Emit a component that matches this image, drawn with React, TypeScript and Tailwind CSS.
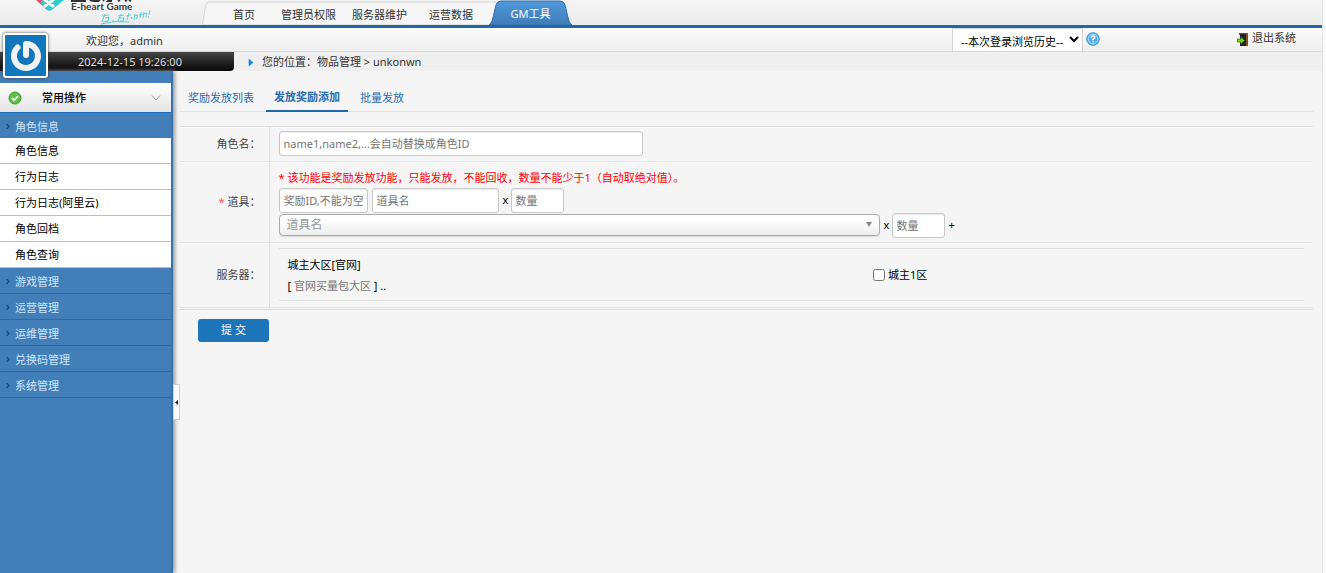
import clsx from "clsx";

const NAV = ["首页", "管理员权限", "服务器维护", "运营数据"];
const SUB_ITEMS = ["角色信息", "行为日志", "行为日志(阿里云)", "角色回档", "角色查询"];
const GROUPS = ["游戏管理", "运营管理", "运维管理", "兑换码管理", "系统管理"];
const TABS = ["奖励发放列表", "发放奖励添加", "批量发放"];

const inputClass =
  "h-[25px] rounded-[3px] border border-[#c8c8c8] bg-white px-1 text-[11px] text-black shadow-[inset_0_1px_1px_rgba(0,0,0,0.08)] placeholder:text-[#757575] focus:outline-none";

function Logo() {
  return (
    <svg className="block h-[25px] w-[130px]" viewBox="0 0 130 25" aria-label="E-heart Game">
      <path d="M6 0 L17 10 L17 0 Z" fill="#ef4f6b" />
      <path d="M11 4 L17 10 Q20 12 23 9 L34 0 L13 0 Q10 2 11 4 Z" fill="#2fc9cf" />
      <path d="M15 0 L23 6 M23 0 L15 6" stroke="#fff" strokeWidth="3" strokeLinecap="round" />
      <path
        d="M41 1 H56 M60 0 Q61 1 68 1 L70 0 M74 0 L73 1 M79 0 L78 1 H82 M90 0 L88 1 M97 0 L95 1 M99 0 L101 1"
        stroke="#333"
        strokeWidth="2"
        fill="none"
      />
      <text x="41" y="10" fontSize="10" fontWeight="700" fill="#3c3c3c" fontFamily="Lato, sans-serif">
        E-heart Game
      </text>
      <path
        d="M72 16 l7 -1 M75 14 l-3 8 M75 18 l4 -1 l-1 4 l-5 1 M82 21 l2 0 M88 16 l6 -1 M91 14 l-3 7 M90 18 l4 0 l-1 3 l-3 0 M96 16 l5 -1 M99 13 l-2 7 M101 17 l1 2 M105 14 l-1 6 M104 16 l4 -1 l-2 4 M111 12 l-1 6 M109 15 l4 -1 M114 12 l-1 6 M114 14 l3 -1 l-1 4 M120 10 l-1 5 M118 17 l1 0 M71 24 q14 -4 28 -2"
        stroke="#5ccfd6"
        strokeWidth="1"
        fill="none"
      />
    </svg>
  );
}

function TopNav() {
  return (
    <header className="flex h-7 items-end border-b-3 border-[#2268a8] bg-linear-to-b from-[#f5f5f5] to-[#ebebeb]">
      <div className="w-[202px] shrink-0 pl-[30px]">
        <Logo />
      </div>
      <nav className="relative h-6 pr-6 pl-[31px] text-[#333]">
        <svg className="absolute inset-0 h-full w-full" viewBox="0 0 300 24" preserveAspectRatio="none">
          <path d="M0 24 C3 16 2 1 7 1 H300 V24 Z" fill="#f6f6f6" stroke="#d2d2d2" strokeWidth="1" />
        </svg>
        <ul className="relative flex h-full items-center gap-4 pt-[3px]">
          {NAV.map((item) => (
            <li key={item} className="first:mr-[10px] last:ml-[6px]">
              <a href="#">{item}</a>
            </li>
          ))}
        </ul>
      </nav>
      <a href="#" className="relative -ml-2 flex h-[25px] w-[83px] items-center justify-center pt-[3px] text-white">
        <svg className="absolute inset-0 h-full w-full" viewBox="0 0 83 25">
          <defs>
            <linearGradient id="tab" x1="0" y1="0" x2="0" y2="1">
              <stop offset="0" stopColor="#5099dc" />
              <stop offset="1" stopColor="#3f7cb6" />
            </linearGradient>
          </defs>
          <path d="M0 25 C4 22 4 16 7 5 Q8 1 12 1 H71 Q75 1 76 5 C79 16 79 22 83 25 Z" fill="url(#tab)" stroke="#2f70ad" />
        </svg>
        <span className="relative">GM工具</span>
      </a>
    </header>
  );
}

function PowerBadge() {
  return (
    <button
      type="button"
      aria-label="首页"
      className="absolute top-[33px] left-[3px] z-10 flex h-[45px] w-[45px] items-center justify-center rounded-[3px] border-2 border-white bg-[#1177bd] shadow-[0_0_3px_#333]"
    >
      <svg className="h-9 w-9" viewBox="0 0 36 36" fill="none" stroke="#f2f2f2" strokeWidth="6" strokeLinecap="round" strokeLinejoin="round">
        <path d="M9.500 9.500 A12 12 0 1 0 18 6 V17" />
      </svg>
    </button>
  );
}

function UserBar() {
  return (
    <div className="flex h-6 items-stretch border-b border-[#d9d9d9] bg-linear-to-b from-[#fcfcfc] to-[#eeeeee] text-[#333]">
      <p className="flex flex-1 items-center pt-[2px] pl-[86px]">欢迎您，admin</p>
      <select
        aria-label="浏览历史"
        className="w-[131px] border-x border-t border-[#d5d5d5] bg-white pt-[2px] pl-1 text-[11px] text-black"
      >
        <option>--本次登录浏览历史--</option>
      </select>
      <div className="flex w-[239px] items-start justify-between pt-[2px] pr-[26px] pl-[3px]">
        <a href="#" aria-label="帮助" className="mt-[2px]">
          <svg className="h-[14px] w-[14px]" viewBox="0 0 14 14">
            <circle cx="7" cy="7" r="6.3" fill="#52aee8" stroke="#3b93d2" />
            <circle cx="7" cy="7" r="4.8" fill="none" stroke="#c8e8fb" strokeWidth="0.8" />
            <path d="M5.2 5.5 Q5.2 4 7 4 Q8.8 4 8.8 5.5 Q8.8 6.5 7 7.2 V8.2 M7 9.4 V10.6" fill="none" stroke="#fff" strokeWidth="1.4" />
          </svg>
        </a>
        <a href="#" className="flex items-center gap-1">
          <svg className="mt-[2px] h-[13px] w-[11px]" viewBox="0 0 11 13">
            <path d="M2 0 H11 V13 H8 V2 H2 Z" fill="#8b4b20" />
            <rect x="3" y="1" width="6" height="12" fill="#222" />
            <path d="M0.500 6 H4 V4 L7.500 7.500 L4 11 V9 H0.500 Z" fill="#7ed321" stroke="#2c7a0c" strokeWidth="0.8" />
          </svg>
          退出系统
        </a>
      </div>
    </div>
  );
}

function LocationBar() {
  return (
    <div className="flex h-[19px] items-center bg-[#efefef] text-[#333]">
      <time className="flex h-full w-[234px] items-center rounded-br-[4px] bg-linear-to-b from-[#454545] to-[#080808] pl-[78px] text-[#dedede]">
        2024-12-15 19:26:00
      </time>
      <svg className="mt-px mr-2 ml-[14px] h-[7px] w-[6px]" viewBox="0 0 6 7">
        <path d="M1 0 L5 3.500 L1 7 Z" fill="#1489dc" stroke="#1489dc" strokeWidth="0.6" />
      </svg>
      <p className="mt-px">您的位置：物品管理 &gt; unkonwn</p>
    </div>
  );
}

function GroupLink({ name }: { name: string }) {
  return (
    <a
      href="#"
      className="flex h-[26px] items-center border-b border-[#2f689f] bg-[#427eb8] pt-[2px] pl-[6px] text-[#cfe6fb]"
    >
      <svg className="mr-[5px] h-[5px] w-[4px]" viewBox="0 0 4 5">
        <path d="M0.500 0 L3 2.500 L0.500 5" fill="none" stroke="#1c4873" strokeWidth="1.2" />
      </svg>
      {name}
    </a>
  );
}

function Sidebar() {
  return (
    <aside className="relative w-[173px] shrink-0 border-r-2 border-[#3a73ab] bg-[#427eb8] pt-3 shadow-[2px_0_4px_#999]">
      <h2 className="flex h-[30px] items-center border-b border-[#1c6fbe] bg-linear-to-b from-white to-[#e4e4e4] px-2 font-medium text-black">
        <svg className="h-[14px] w-[14px]" viewBox="0 0 14 14">
          <circle cx="7" cy="7" r="6" fill="#5cc043" stroke="#3e9b2c" />
          <path d="M4 7 L6.300 9.300 L10 5" fill="none" stroke="#fff" strokeWidth="1.8" />
        </svg>
        <span className="flex-1 pl-5">常用操作</span>
        <svg className="mr-[2px] h-[6px] w-[10px]" viewBox="0 0 10 6">
          <path d="M1 0.500 L5 5 L9 0.500" fill="none" stroke="#999" />
        </svg>
      </h2>
      <GroupLink name="角色信息" />
      <ul className="-mt-px">
        {SUB_ITEMS.map((item) => (
          <li key={item}>
            <a href="#" className="flex h-[26px] items-center border-b border-[#bfbfbf] bg-white pl-[15px] text-black">
              {item}
            </a>
          </li>
        ))}
      </ul>
      {GROUPS.map((name) => (
        <GroupLink key={name} name={name} />
      ))}
      <button
        type="button"
        aria-label="收起菜单"
        className="absolute top-[313px] left-[173px] flex h-9 w-[7px] items-center justify-center border border-[#cfcfcf] bg-[#fafafa]"
      >
        <svg className="h-[5px] w-[3px] shrink-0" viewBox="0 0 3 5">
          <path d="M3 0 L0 2.500 L3 5 Z" fill="#222" />
        </svg>
      </button>
    </aside>
  );
}

function RewardForm() {
  const row = "border-b border-[#e4e4e4]";
  const labelCell =
    "w-[89px] border-r border-[#dcdcdc] pr-2 text-right font-normal text-[#444] shadow-[inset_0_1px_0_#fff]";
  const cell = "px-[9px] text-black shadow-[inset_0_1px_0_#fff]";
  return (
    <form>
      <div className="border-y border-[#dcdcdc] pb-px">
        <table className="w-full border-collapse">
          <tbody>
            <tr className={clsx(row, "h-[34px]")}>
              <th className={labelCell}>
                <label htmlFor="role">角色名：</label>
              </th>
              <td className={cell}>
                <input id="role" className={clsx(inputClass, "block w-[364px]")} placeholder="name1,name2,...会自动替换成角色ID" />
              </td>
            </tr>
            <tr className={clsx(row, "h-[81px]")}>
              <th className={labelCell}>
                <span className="text-[#f55]">*</span> 道具：
              </th>
              <td className={clsx(cell, "pt-1")}>
                <p className="mb-[2px] h-4 leading-4 text-[#f00]">
                  * 该功能是奖励发放功能，只能发放，不能回收，数量不能少于1（自动取绝对值）。
                </p>
                <div className="flex items-center gap-1">
                  <input aria-label="奖励ID" className={clsx(inputClass, "w-[89px]")} placeholder="奖励ID,不能为空" />
                  <input aria-label="道具名" className={clsx(inputClass, "w-[127px]")} placeholder="道具名" />
                  <span className="w-[4px]">x</span>
                  <input aria-label="数量" className={clsx(inputClass, "w-[53px]")} placeholder="数量" />
                </div>
                <div className="flex items-center">
                  <div className="relative w-[601px]">
                    <select
                      aria-label="选择道具"
                      className="block h-[22px] w-full appearance-none rounded-[4px] border border-[#aaa] bg-linear-to-b from-white from-20% to-[#eee] pl-[7px] text-[12px] text-[#999] shadow-[0_1px_1px_rgba(0,0,0,0.1)]"
                    >
                      <option>道具名</option>
                    </select>
                    <svg className="pointer-events-none absolute top-2 right-2 h-[5px] w-[6px]" viewBox="0 0 6 5">
                      <path d="M0 0 H6 L3 5 Z" fill="#888" />
                    </svg>
                  </div>
                  <span className="mx-1 w-[4px]">x</span>
                  <input aria-label="道具数量" className={clsx(inputClass, "w-[53px]")} placeholder="数量" />
                  <button type="button" className="ml-1">
                    +
                  </button>
                </div>
              </td>
            </tr>
            <tr className={clsx(row, "h-[65px]")}>
              <th className={labelCell}>服务器：</th>
              <td className={cell}>
                <div className="flex h-[53px] items-center border-y border-[#dedede] shadow-[0_1px_0_#fff]">
                  <div className="flex-1 pl-[9px] leading-[21px]">
                    <p>城主大区[官网]</p>
                    <p>
                      [ <a href="#" className="text-[#777]">官网买量包大区</a> ] ..
                    </p>
                  </div>
                  <label className="flex w-[431px] items-center gap-[3px]">
                    <input type="checkbox" className="h-3 w-3" />
                    城主1区
                  </label>
                </div>
              </td>
            </tr>
          </tbody>
        </table>
      </div>
      <button type="submit" className="mt-[9px] ml-[18px] h-[23px] w-[71px] rounded-[3px] bg-[#1c75b9] text-white">
        提 交
      </button>
    </form>
  );
}

export default function App() {
  return (
    <div className="min-h-screen bg-[#fafafa] pr-[3px] font-['Noto_Sans','Noto_Sans_CJK_SC',sans-serif] text-[11px] leading-4">
      <div className="relative flex min-h-screen flex-col border-r border-[#e4e4e4] bg-[#f5f5f5]">
        <TopNav />
        <UserBar />
        <LocationBar />
        <PowerBadge />
        <div className="flex flex-1">
          <Sidebar />
          <main className="min-w-0 flex-1 pt-3 pr-[9px] pl-[7px]">
            <div className="mb-[14px] flex h-[29px] border-b border-[#e2e2e2]">
              {TABS.map((tab) => (
                <a
                  key={tab}
                  href="#"
                  className={clsx(
                    "flex h-[29px] items-center px-2 text-[#2a6cb0]",
                    tab === "发放奖励添加" && "mx-1 border-b-2 border-[#1d67ad] font-bold",
                  )}
                >
                  {tab}
                </a>
              ))}
            </div>
            <RewardForm />
          </main>
        </div>
      </div>
    </div>
  );
}
